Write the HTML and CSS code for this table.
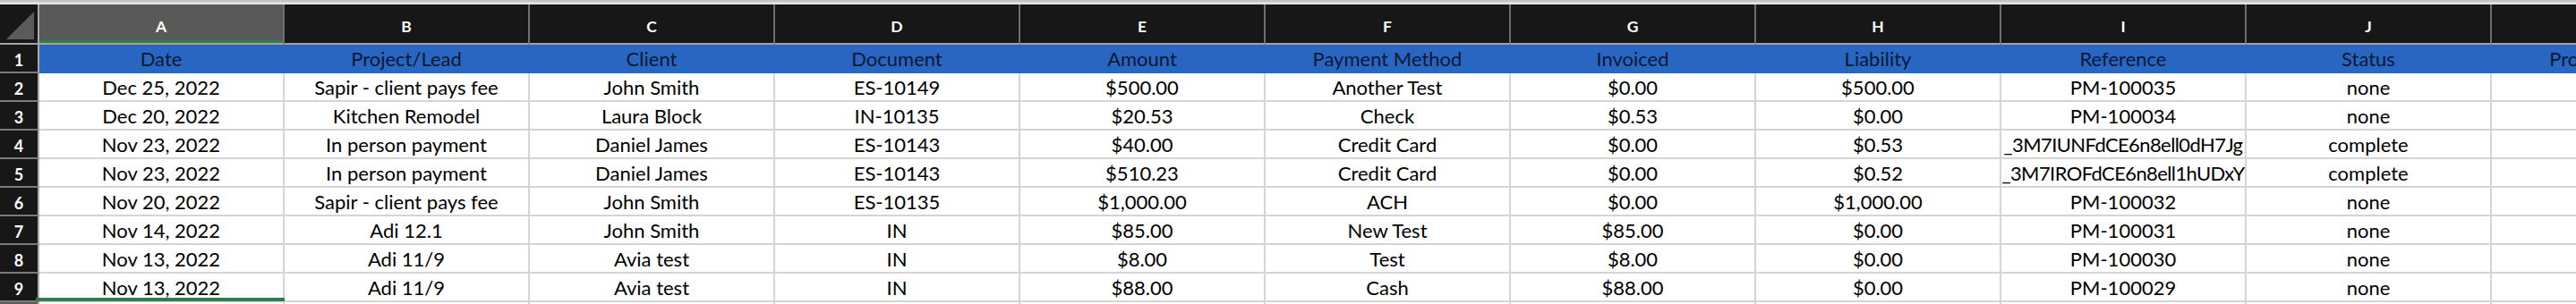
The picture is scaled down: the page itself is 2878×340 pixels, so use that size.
FILE: index.html
```html
<!DOCTYPE html>
<html lang="en">
<head>
<meta charset="utf-8">
<title>Payments</title>
<link rel="stylesheet" href="styles.css">
</head>
<body>
<div class="sheet">
  <div class="topband"></div>

  <div class="corner"><svg class="corner-tri" width="42" height="43" viewBox="0 0 42 43"><polygon points="38,8 38,39 7,39" fill="#5b5b5b"/></svg></div>
  <div class="colhdr sel">A</div>
  <div class="colhdr">B</div>
  <div class="colhdr">C</div>
  <div class="colhdr">D</div>
  <div class="colhdr">E</div>
  <div class="colhdr">F</div>
  <div class="colhdr">G</div>
  <div class="colhdr">H</div>
  <div class="colhdr">I</div>
  <div class="colhdr">J</div>
  <div class="colhdr">K</div>

  <div class="rowhdr">1</div>
  <div class="cell head">Date</div>
  <div class="cell head">Project/Lead</div>
  <div class="cell head">Client</div>
  <div class="cell head">Document</div>
  <div class="cell head">Amount</div>
  <div class="cell head">Payment Method</div>
  <div class="cell head">Invoiced</div>
  <div class="cell head">Liability</div>
  <div class="cell head">Reference</div>
  <div class="cell head">Status</div>
  <div class="cell head">Processing Fee</div>

  <div class="rowhdr">2</div>
  <div class="cell">Dec 25, 2022</div>
  <div class="cell">Sapir - client pays fee</div>
  <div class="cell">John Smith</div>
  <div class="cell">ES-10149</div>
  <div class="cell">$500.00</div>
  <div class="cell">Another Test</div>
  <div class="cell">$0.00</div>
  <div class="cell">$500.00</div>
  <div class="cell">PM-100035</div>
  <div class="cell">none</div>
  <div class="cell"></div>

  <div class="rowhdr">3</div>
  <div class="cell">Dec 20, 2022</div>
  <div class="cell">Kitchen Remodel</div>
  <div class="cell">Laura Block</div>
  <div class="cell">IN-10135</div>
  <div class="cell">$20.53</div>
  <div class="cell">Check</div>
  <div class="cell">$0.53</div>
  <div class="cell">$0.00</div>
  <div class="cell">PM-100034</div>
  <div class="cell">none</div>
  <div class="cell"></div>

  <div class="rowhdr">4</div>
  <div class="cell">Nov 23, 2022</div>
  <div class="cell">In person payment</div>
  <div class="cell">Daniel James</div>
  <div class="cell">ES-10143</div>
  <div class="cell">$40.00</div>
  <div class="cell">Credit Card</div>
  <div class="cell">$0.00</div>
  <div class="cell">$0.53</div>
  <div class="cell"><span class="clip">_3M7IUNFdCE6n8ell0dH7Jg</span></div>
  <div class="cell">complete</div>
  <div class="cell"></div>

  <div class="rowhdr">5</div>
  <div class="cell">Nov 23, 2022</div>
  <div class="cell">In person payment</div>
  <div class="cell">Daniel James</div>
  <div class="cell">ES-10143</div>
  <div class="cell">$510.23</div>
  <div class="cell">Credit Card</div>
  <div class="cell">$0.00</div>
  <div class="cell">$0.52</div>
  <div class="cell"><span class="clip">_3M7IROFdCE6n8ell1hUDxY</span></div>
  <div class="cell">complete</div>
  <div class="cell"></div>

  <div class="rowhdr">6</div>
  <div class="cell">Nov 20, 2022</div>
  <div class="cell">Sapir - client pays fee</div>
  <div class="cell">John Smith</div>
  <div class="cell">ES-10135</div>
  <div class="cell">$1,000.00</div>
  <div class="cell">ACH</div>
  <div class="cell">$0.00</div>
  <div class="cell">$1,000.00</div>
  <div class="cell">PM-100032</div>
  <div class="cell">none</div>
  <div class="cell"></div>

  <div class="rowhdr">7</div>
  <div class="cell">Nov 14, 2022</div>
  <div class="cell">Adi 12.1</div>
  <div class="cell">John Smith</div>
  <div class="cell">IN</div>
  <div class="cell">$85.00</div>
  <div class="cell">New Test</div>
  <div class="cell">$85.00</div>
  <div class="cell">$0.00</div>
  <div class="cell">PM-100031</div>
  <div class="cell">none</div>
  <div class="cell"></div>

  <div class="rowhdr">8</div>
  <div class="cell">Nov 13, 2022</div>
  <div class="cell">Adi 11/9</div>
  <div class="cell">Avia test</div>
  <div class="cell">IN</div>
  <div class="cell">$8.00</div>
  <div class="cell">Test</div>
  <div class="cell">$8.00</div>
  <div class="cell">$0.00</div>
  <div class="cell">PM-100030</div>
  <div class="cell">none</div>
  <div class="cell"></div>

  <div class="rowhdr">9</div>
  <div class="cell">Nov 13, 2022</div>
  <div class="cell">Adi 11/9</div>
  <div class="cell">Avia test</div>
  <div class="cell">IN</div>
  <div class="cell">$88.00</div>
  <div class="cell">Cash</div>
  <div class="cell">$88.00</div>
  <div class="cell">$0.00</div>
  <div class="cell">PM-100029</div>
  <div class="cell">none</div>
  <div class="cell"></div>

  <div class="rowhdr selrow">10</div>
  <div class="cell active"></div>
  <div class="cell"></div>
  <div class="cell"></div>
  <div class="cell"></div>
  <div class="cell"></div>
  <div class="cell"></div>
  <div class="cell"></div>
  <div class="cell"></div>
  <div class="cell"></div>
  <div class="cell"></div>
  <div class="cell"></div>
</div>
</body>
</html>
```

FILE: styles.css
```css
html, body {
  margin: 0;
  padding: 0;
  background: #ffffff;
  overflow: hidden;
}

.sheet {
  width: 2878px;
  height: 340px;
  overflow: hidden;
  display: grid;
  grid-template-columns: 44px repeat(11, 274px);
  grid-template-rows: 5px 45px repeat(10, 32px);
  font-family: "Lato", "Open Sans", sans-serif;
}

.topband {
  grid-column: 1 / -1;
  background: #dcdcdc;
  border-top: 2px solid #c4c4c4;
  border-bottom: 1px solid #ededed;
  box-sizing: border-box;
}

.corner {
  background: #171717;
  border-right: 2px solid #a9a9a9;
  border-bottom: 2px solid #a3a3a3;
  box-sizing: border-box;
  position: relative;
}

.corner-tri {
  display: block;
}

.colhdr {
  background: #171717;
  color: #ffffff;
  font-weight: 700;
  font-size: 17.5px;
  display: flex;
  align-items: center;
  justify-content: center;
  padding-top: 6px;
  box-sizing: border-box;
  border-right: 2px solid #6f6f6f;
  border-bottom: 2px solid #a3a3a3;
}

.colhdr.sel {
  background: #595959;
  box-shadow: inset 0 -3px 0 #36794a;
}

.rowhdr {
  background: #171717;
  color: #ffffff;
  font-weight: 700;
  font-size: 18px;
  display: flex;
  align-items: center;
  justify-content: center;
  padding-top: 3px;
  box-sizing: border-box;
  border-right: 2px solid #a9a9a9;
  border-bottom: 2px solid #7a7a7a;
}

.rowhdr.selrow {
  background: #5b5b5b;
}

.cell {
  background: #ffffff;
  color: #000000;
  font-size: 22px;
  display: flex;
  align-items: center;
  justify-content: center;
  padding-top: 1px;
  box-sizing: border-box;
  border-right: 2px solid #d5d5d5;
  border-bottom: 2px solid #d5d5d5;
  white-space: nowrap;
  overflow: hidden;
}

.cell.head {
  background: #2866c1;
  color: #0c1834;
  border-right-color: #2866c1;
  border-bottom-color: #2866c1;
}

.clip {
  flex: none;
  letter-spacing: -0.6px;
}

.cell.active {
  position: relative;
  overflow: visible;
}

.cell.active::before {
  content: "";
  position: absolute;
  left: -4px;
  right: -2px;
  top: -5px;
  height: 4px;
  background: #36794a;
}
```
